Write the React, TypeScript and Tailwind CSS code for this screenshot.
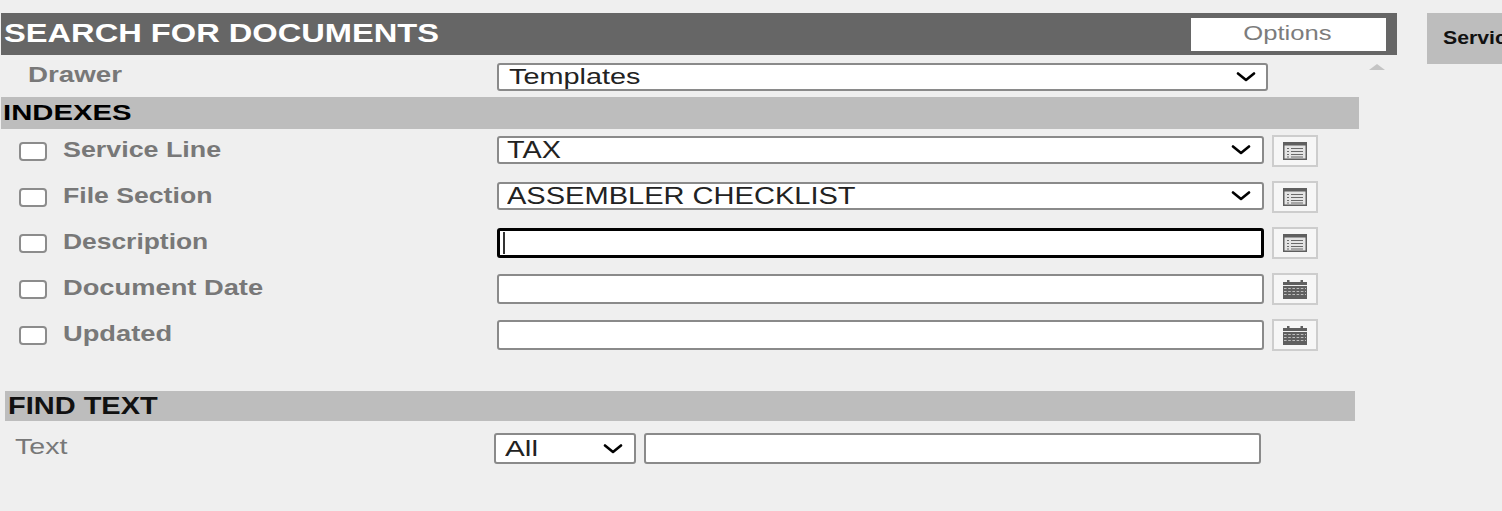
function Chevron({ className }: { className: string }) {
  return (
    <svg className={className} viewBox="0 0 20 10" fill="none" preserveAspectRatio="none">
      <path d="M2 1.5 L10 8 L18 1.5" stroke="#000" strokeWidth="2.6" strokeLinecap="round" strokeLinejoin="round" />
    </svg>
  );
}

function ListIcon() {
  return (
    <svg width="24" height="18" viewBox="0 0 24 18">
      <rect x="0.75" y="0.75" width="22.5" height="16.5" fill="#e4e4e4" stroke="#5f5f5f" strokeWidth="1.5" />
      <rect x="1" y="1" width="22" height="2.5" fill="#5f5f5f" />
      <path d="M4 6.5h2M8 6.5h12M4 9.5h2M8 9.5h12M4 12.5h2M8 12.5h12M4 15h2M8 15h12" stroke="#6a6a6a" strokeWidth="1.2" />
    </svg>
  );
}

function CalendarIcon() {
  return (
    <svg width="24" height="19" viewBox="0 0 24 19">
      <rect x="0" y="2" width="24" height="17" fill="#5f5f5f" />
      <rect x="4" y="0" width="2.5" height="3" fill="#5f5f5f" />
      <rect x="17.5" y="0" width="2.5" height="3" fill="#5f5f5f" />
      <path d="M0 5.5h24" stroke="#efefef" strokeWidth="1" />
      <path d="M1 8.5h22M1 11.5h22M1 14.5h22" stroke="#bdbdbd" strokeWidth="1" strokeDasharray="2.6 1.6" />
    </svg>
  );
}

function IconButton({ icon }: { icon: "list" | "calendar" }) {
  return (
    <div className="ml-[8px] flex h-[32px] w-[46px] shrink-0 items-center justify-center border-2 border-[#cdcdcd] bg-[#f6f6f6]">
      {icon === "list" ? <ListIcon /> : <CalendarIcon />}
    </div>
  );
}

type Row = {
  label: string;
  scale: string;
  value?: string;
  valueScale?: string;
  select?: boolean;
  focused?: boolean;
  icon: "list" | "calendar";
};

const rows: Row[] = [
  { label: "Service Line", scale: "scale-x-[1.22]", value: "TAX", valueScale: "scale-x-[1.2]", select: true, icon: "list" },
  { label: "File Section", scale: "scale-x-[1.21]", value: "ASSEMBLER CHECKLIST", valueScale: "scale-x-[1.21]", select: true, icon: "list" },
  { label: "Description", scale: "scale-x-[1.2]", focused: true, icon: "list" },
  { label: "Document Date", scale: "scale-x-[1.24]", icon: "calendar" },
  { label: "Updated", scale: "scale-x-[1.24]", icon: "calendar" },
];

function IndexRow({ row }: { row: Row }) {
  let field = "flex h-[30px] w-[767px] items-center rounded-[3px] border-2 border-[#8a8a8a] bg-white pl-[8px] pr-[3px]";
  if (row.focused) field = "flex h-[30px] w-[767px] items-center rounded-[3px] border-[3px] border-black bg-white pl-[3px]";
  if (row.select) field = "mb-[2px] flex h-[28px] w-[767px] items-center justify-between rounded-[3px] border-2 border-[#8a8a8a] bg-white pl-[8px] pr-[3px]";

  return (
    <div className="flex h-[46px] items-center">
      <div className="ml-[18px] h-[19px] w-[28px] shrink-0 rounded-[4px] border-2 border-[#8c8c8c] bg-white" />
      <div className="ml-[16px] w-[434px] shrink-0">
        <span className={`mb-[3px] block origin-left text-[22px] font-bold text-[#787878] ${row.scale}`}>{row.label}</span>
      </div>
      <div className={field}>
        {row.focused && <div className="h-[22px] w-[2px] bg-[#333]" />}
        {row.value && (
          <span className={`mb-[1px] block origin-left text-[24px] text-[#222] ${row.valueScale}`}>{row.value}</span>
        )}
        {row.select && <Chevron className="mr-[8px] h-[10px] w-[20px]" />}
      </div>
      <IconButton icon={row.icon} />
    </div>
  );
}

export default function App() {
  return (
    <div className="flex h-[511px] w-[1502px] overflow-hidden bg-[#efefef] pt-[13px] font-['Liberation_Sans',Arial,sans-serif]">
      <div className="ml-[1px] w-[1396px] shrink-0">
        <div className="flex h-[42px] items-center justify-between bg-[#666] pl-[3px] pr-[11px]">
          <h1 className="origin-left scale-x-[1.305] text-[25px] font-bold text-white">SEARCH FOR DOCUMENTS</h1>
          <button className="h-[33px] w-[195px] bg-white pb-[2px] pr-[2px] text-[20px] text-[#7c7c7c]">
            <span className="inline-block scale-x-[1.28]">Options</span>
          </button>
        </div>

        <div className="relative flex h-[42px] items-center pt-[1px]">
          <div className="ml-[27px] w-[469px] shrink-0">
            <span className="block origin-left scale-x-[1.26] pb-[4px] text-[22px] font-bold text-[#787878]">Drawer</span>
          </div>
          <div className="flex h-[28px] w-[771px] items-center justify-between rounded-[3px] border-2 border-[#8a8a8a] bg-white pl-[10px] pr-[10px]">
            <span className="block origin-left scale-x-[1.31] text-[22px] text-[#222]">Templates</span>
            <Chevron className="h-[10px] w-[20px]" />
          </div>
          <div className="absolute left-[1368px] top-[9px] h-0 w-0 border-x-[8px] border-b-[6px] border-x-transparent border-b-[#c4c4c4]" />
        </div>

        <div className="flex h-[32px] w-[1358px] items-center bg-[#bdbdbd] pl-[2px] pb-[2px]">
          <h2 className="origin-left scale-x-[1.33] text-[22px] font-bold text-black">INDEXES</h2>
        </div>

        <div className="-mt-px pb-[33px]">
          {rows.map((row) => (
            <IndexRow key={row.label} row={row} />
          ))}
        </div>

        <div className="ml-[4px] flex h-[30px] w-[1350px] items-center bg-[#bdbdbd] pl-[3px]">
          <h2 className="origin-left scale-x-[1.26] text-[23px] font-bold text-[#111]">FIND TEXT</h2>
        </div>

        <div className="mt-[12px] flex h-[31px] items-center">
          <div className="ml-[14px] w-[479px] shrink-0">
            <span className="block origin-left scale-x-[1.3] pb-[4px] text-[22px] text-[#787878]">Text</span>
          </div>
          <div className="flex h-[31px] w-[142px] shrink-0 items-center justify-between rounded-[3px] border-2 border-[#8a8a8a] bg-white pl-[9px] pr-[11px]">
            <span className="block origin-left scale-x-[1.35] text-[22px] text-[#222]">All</span>
            <Chevron className="h-[10px] w-[20px]" />
          </div>
          <div className="ml-[8px] h-[31px] w-[617px] rounded-[3px] border-2 border-[#8a8a8a] bg-white" />
        </div>
      </div>

      <div className="ml-[30px] flex h-[51px] flex-1 items-center overflow-hidden whitespace-nowrap bg-[#bdbdbd] pl-[16px]">
        <span className="block origin-left scale-x-[1.18] text-[18px] font-bold text-[#111]">Service Line</span>
      </div>
    </div>
  );
}
